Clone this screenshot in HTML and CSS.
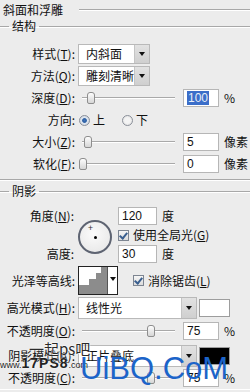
FILE: index.html
```html
<!DOCTYPE html>
<html lang="zh-CN">
<head>
    <meta charset="UTF-8">
    <title>斜面和浮雕</title>
    <link rel="stylesheet" href="styles.css">
</head>
<body>
    <div class="panel">
        <div class="title-row">
            <span>斜面和浮雕</span>
            <i class="rule"></i>
        </div>

        <fieldset class="group g1">
            <legend>结构</legend>
            <div class="row">
                <label class="lbl">样式(<u>T</u>):</label>
                <div class="select sel-short"><span>内斜面</span><b class="arr"></b></div>
            </div>
            <div class="row">
                <label class="lbl">方法(<u>Q</u>):</label>
                <div class="select sel-short"><span>雕刻清晰</span><b class="arr"></b></div>
            </div>
            <div class="row">
                <label class="lbl">深度(<u>D</u>):</label>
                <div class="slider"><i class="thumb" style="left: 9px"></i></div>
                <div class="field"><span class="sel-text">100</span></div>
                <span class="unit">%</span>
            </div>
            <div class="row">
                <label class="lbl">方向:</label>
                <span class="radio on"></span><span class="opt">上</span>
                <span class="radio"></span><span class="opt">下</span>
            </div>
            <div class="row">
                <label class="lbl">大小(<u>Z</u>):</label>
                <div class="slider"><i class="thumb" style="left: 6px"></i></div>
                <div class="field">5</div>
                <span class="unit">像素</span>
            </div>
            <div class="row">
                <label class="lbl">软化(<u>F</u>):</label>
                <div class="slider"><i class="thumb" style="left: 1px"></i></div>
                <div class="field">0</div>
                <span class="unit">像素</span>
            </div>
        </fieldset>

        <fieldset class="group g2">
            <legend>阴影</legend>
            <div class="angle-block">
                <label class="lbl a1">角度(<u>N</u>):</label>
                <div class="dial"><i class="cross">+</i><i class="dot"></i></div>
                <div class="cell"><div class="field wide">120</div><span class="unit">度</span></div>
                <div class="cell"><span class="check"></span><span class="opt">使用全局光(<u>G</u>)</span></div>
                <label class="lbl a3">高度:</label>
                <div class="cell"><div class="field wide">30</div><span class="unit">度</span></div>
            </div>
            <div class="row contour-row">
                <label class="lbl">光泽等高线:</label>
                <div class="contour">
                    <svg width="29" height="27" viewBox="0 0 29 27">
                        <polygon points="0,27 0,18 10,18 10,12 17,12 17,6 22,6 22,0 29,0 29,27" fill="#8c8c8c"/>
                        <line x1="28.5" y1="0" x2="28.5" y2="27" stroke="#555"/>
                    </svg>
                    <b class="arr-small"></b>
                </div>
                <span class="check"></span><span class="opt">消除锯齿(<u>L</u>)</span>
            </div>
            <div class="row mode-row">
                <label class="lbl">高光模式(<u>H</u>):</label>
                <div class="select sel-long"><span>线性光</span><b class="arr"></b></div>
                <span class="swatch white"></span>
            </div>
            <div class="row op-row">
                <label class="lbl">不透明度(<u>O</u>):</label>
                <div class="slider"><i class="thumb" style="left: 69px"></i></div>
                <div class="field">75</div>
                <span class="unit">%</span>
            </div>
            <div class="row mode-row">
                <label class="lbl">阴影模式(<u>A</u>):</label>
                <div class="select sel-long"><span>正片叠底</span><b class="arr"></b></div>
                <span class="swatch black"></span>
            </div>
            <div class="row">
                <label class="lbl">不透明度(<u>C</u>):</label>
                <div class="slider"><i class="thumb" style="left: 69px"></i></div>
                <div class="field">75</div>
                <span class="unit">%</span>
            </div>
        </fieldset>

        <!-- watermarks over the dialog -->
        <div class="wm-ps">
            <span class="wm-cn">一起ps吧</span>
            <span class="wm-url">www.<b>17PS8</b>.com</span>
        </div>
        <div class="wm-uibq">UiBQ.CoM</div>
    </div>
</body>
</html>
```

FILE: styles.css
```css
body {
    margin: 0;
    background-color: #ececec;
    font-family: "Noto Sans CJK SC", "Liberation Sans", sans-serif;
    font-size: 12px;
    line-height: 14px;
    color: #111;
}
.panel {
    position: relative;
    width: 250px;
    height: 392px;
    overflow: hidden;
}
u {
    text-decoration: underline;
    text-underline-offset: 1px;
}
.title-row {
    display: flex;
    align-items: center;
    height: 19px;
    padding-left: 3px;
}
.rule {
    flex: 1;
    margin-left: 16px;
    border-top: 1px solid #a8a8a8;
    border-bottom: 1px solid #fff;
}
.group {
    margin: 0;
    padding: 0;
    border: none;
    border-top: 1px solid #a8a8a8;
    border-bottom: 1px solid #a8a8a8;
    box-shadow: 0 1px 0 #fff, inset 0 1px 0 #fff;
    min-width: 0;
}
.group legend {
    margin-left: 9px;
    padding: 0 3px;
    line-height: 14px;
}
.g1 {
    padding-top: 10px;
    padding-bottom: 4px;
}
.g2 {
    margin-top: 4px;
    padding-top: 9px;
    border-bottom: none;
}
.row {
    display: flex;
    align-items: center;
    height: 22px;
}
.lbl {
    width: 75px;
    flex: none;
    text-align: right;
    white-space: nowrap;
    margin-right: 3px;
}
.select {
    display: flex;
    height: 20px;
    box-sizing: border-box;
    background: #fff;
    border: 1px solid #b9b9b9;
}
.select span {
    flex: 1;
    padding-left: 7px;
    line-height: 18px;
    white-space: nowrap;
    overflow: hidden;
}
.sel-short {
    width: 72px;
}
.sel-long {
    width: 119px;
    height: 22px;
}
.sel-long span {
    line-height: 20px;
}
.arr {
    position: relative;
    width: 14px;
    background: linear-gradient(#e2e2e2, #cfcfcf);
    border-left: 1px solid #c4c4c4;
}
.arr::after {
    content: "";
    position: absolute;
    left: 4px;
    top: 50%;
    margin-top: -2px;
    border-left: 3px solid transparent;
    border-right: 3px solid transparent;
    border-top: 4px solid #111;
}
.slider {
    position: relative;
    width: 100px;
    height: 14px;
    margin-right: 5px;
    flex: none;
}
.slider::before {
    content: "";
    position: absolute;
    left: 4px;
    right: 3px;
    top: 6px;
    border-top: 1px solid #a9a9a9;
    border-bottom: 1px solid #fff;
}
.thumb {
    position: absolute;
    top: 1px;
    width: 6px;
    height: 10px;
    background: linear-gradient(#fdfdfd, #d6d6d6);
    border: 1px solid #8e8e8e;
    border-radius: 3px 3px 2px 2px;
}
.field {
    width: 36px;
    height: 18px;
    box-sizing: border-box;
    background: #fff;
    border: 1px solid #b6b6b6;
    padding-left: 3px;
    line-height: 16px;
    font-family: "Liberation Sans", sans-serif;
    font-size: 12px;
    flex: none;
}
.field.wide {
    width: 39px;
}
.sel-text {
    background: #3b6ec9;
    color: #e8eef8;
    padding: 0 1px;
}
.unit {
    margin-left: 5px;
    white-space: nowrap;
}
.radio {
    width: 9px;
    height: 9px;
    border-radius: 50%;
    border: 1px solid #8a8f99;
    background: radial-gradient(circle, #f4f4f4 40%, #d9d9d9);
    margin-left: 1px;
    flex: none;
}
.radio.on {
    background: radial-gradient(circle, #3f73b8 0, #2b5ea3 30%, #dfe6ef 45%, #c9d0da);
}
.opt {
    margin-left: 3px;
    margin-right: 16px;
    white-space: nowrap;
}
.check {
    position: relative;
    width: 9px;
    height: 9px;
    border: 1px solid #7d8591;
    background: linear-gradient(#f6f6f6, #dcdcdc);
    flex: none;
}
.check::after {
    content: "";
    position: absolute;
    left: 2px;
    top: 0px;
    width: 3px;
    height: 6px;
    border-right: 2px solid #3a5f8f;
    border-bottom: 2px solid #3a5f8f;
    transform: rotate(40deg);
}
.angle-block {
    display: grid;
    grid-template-columns: 78px 40px auto;
    grid-template-rows: 18px 20px 18px;
    align-items: center;
}
.angle-block .lbl {
    margin-right: 0;
    width: 74px;
}
.a1 {
    grid-row: 1;
    grid-column: 1;
}
.a3 {
    grid-row: 3;
    grid-column: 1;
}
.dial {
    grid-row: 1 / 4;
    grid-column: 2;
    position: relative;
    width: 30px;
    height: 30px;
    border-radius: 50%;
    border: 2px solid #5e6472;
    background: radial-gradient(circle at 45% 40%, #fbfbfb, #e4e4e4);
    margin-top: 4px;
}
.dot {
    position: absolute;
    left: 14px;
    top: 14px;
    width: 3px;
    height: 3px;
    border-radius: 50%;
    background: #000;
}
.cross {
    position: absolute;
    left: 8px;
    top: 1px;
    font-style: normal;
    font-size: 9px;
    line-height: 9px;
    color: #333;
}
.cell {
    display: flex;
    align-items: center;
    grid-column: 3;
}
.cell .opt {
    margin-left: 4px;
}
.contour-row {
    height: 29px;
    margin-top: 3px;
}
.contour {
    display: flex;
    width: 40px;
    height: 29px;
    box-sizing: border-box;
    border: 1px solid #222;
    background: #fff;
    margin-right: 15px;
}
.contour svg {
    display: block;
}
.arr-small {
    position: relative;
    flex: 1;
}
.arr-small::after {
    content: "";
    position: absolute;
    left: 2px;
    top: 10px;
    border-left: 3px solid transparent;
    border-right: 3px solid transparent;
    border-top: 4px solid #111;
}
.contour-row .opt {
    margin-left: 4px;
}
.mode-row {
    height: 22px;
    margin-top: 2px;
}
.op-row {
    height: 24px;
}
.swatch {
    width: 29px;
    height: 16px;
    border: 1px solid #9d9d9d;
    margin-left: 2px;
    flex: none;
}
.swatch.white {
    background: #fff;
}
.swatch.black {
    background: #000;
}
.wm-ps {
    position: absolute;
    left: 0;
    top: 340px;
    width: 130px;
}
.wm-cn {
    display: block;
    padding-left: 29px;
    font-size: 15px;
    line-height: 17px;
    white-space: nowrap;
    color: #2a2a2a;
    text-shadow: 0 0 2px #fff, 0 0 2px #fff;
}
.wm-url {
    display: block;
    font-family: "Liberation Sans", sans-serif;
    font-size: 9px;
    line-height: 13px;
    white-space: nowrap;
    color: #222;
    text-shadow: 0 0 2px #fff;
}
.wm-url b {
    font-size: 14px;
    letter-spacing: 1px;
}
.wm-uibq {
    position: absolute;
    left: 80px;
    top: 351px;
    font-family: "Liberation Sans", sans-serif;
    font-size: 31px;
    line-height: 36px;
    white-space: nowrap;
    color: #1c64c9;
}
```
